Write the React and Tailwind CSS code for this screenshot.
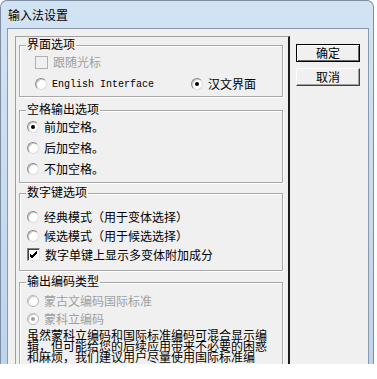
import React from 'react'

const cjk = "font-['Noto_Sans_CJK_SC','Noto_Sans_CJK_JP',sans-serif]"

function Radio({ checked, disabled }) {
  return (
    <span
      className={`relative inline-block w-[12px] h-[12px] shrink-0 rounded-full border ${
        disabled ? 'border-[#b8b8b8]' : 'border-t-[#8a8a8a] border-l-[#8a8a8a] border-b-[#dcdcdc] border-r-[#dcdcdc]'
      } bg-white shadow-[inset_1px_1px_0_#c8c8c8]`}
    >
      {checked && (
        <span
          className={`absolute left-[3px] top-[3px] w-[4px] h-[4px] rounded-full ${disabled ? 'bg-[#a0a0a0]' : 'bg-black'}`}
        />
      )}
    </span>
  )
}

function Check({ checked, disabled }) {
  return (
    <span
      className={`relative inline-block w-[13px] h-[13px] shrink-0 border ${
        disabled
          ? 'border-[#b0b0b0] bg-[#f0f0f0]'
          : 'border-t-[#808080] border-l-[#808080] border-b-[#e6e6e6] border-r-[#e6e6e6] bg-white shadow-[inset_1px_1px_0_#404040]'
      }`}
    >
      {checked && (
        <svg className="absolute left-[1px] top-[1px]" width="9" height="9" viewBox="0 0 9 9">
          <path d="M1 4 L3 6 L8 1 M1 5 L3 7 L8 2 M1 6 L3 8 L8 3" stroke="#000" strokeWidth="1" fill="none" />
        </svg>
      )}
    </span>
  )
}

function Group({ label, className, children }) {
  return (
    <div className={`relative shrink-0 border border-[#a8a8a8] shadow-[1px_1px_0_#fff,inset_1px_1px_0_#fff] ${className}`}>
      <span className="absolute left-[6px] -top-[9px] px-[1px] bg-[#f0f0f0] text-[12px] leading-[14px] text-black">
        {label}
      </span>
      {children}
    </div>
  )
}

function Row({ h, pl, children, disabled }) {
  return (
    <div
      className={`flex items-center gap-[5px] ${h} ${pl} text-[12px] ${disabled ? 'text-[#a0a0a0]' : 'text-black'}`}
    >
      {children}
    </div>
  )
}

export default function App() {
  return (
    <div className={`w-[377px] h-[379px] bg-white overflow-hidden ${cjk}`}>
      <div className="w-[374px] h-[364px] rounded-t-[7px] border border-b-0 border-[#7f8fa3] bg-gradient-to-b from-[#d2e3f4] via-[#c9ddf1] to-[#bcd4ed] flex flex-col">
        <div className="h-[27px] shrink-0 pl-[7px] flex items-center text-[12px] text-black">输入法设置</div>
        <div className="ml-[6px] w-[362px] flex-1 min-h-0 overflow-hidden border border-b-0 border-[#8b9aab] bg-[#f0f0f0] flex items-start">
          <div className="ml-[7px] mt-[7px] w-[275px] h-[340px] shrink-0 border-l border-t border-[#a0a0a0] border-r-2 border-r-[#1c1c1c] pl-[3px] pr-[5px] pt-[8px] flex flex-col">
            <Group label="界面选项" className="h-[52px] pt-[5px]">
              <Row h="h-[22px]" pl="pl-[15px]" disabled>
                <Check disabled />
                <span>跟随光标</span>
              </Row>
              <div className="flex h-[22px] items-center">
                <div className="flex items-center gap-[5px] pl-[15px] w-[171px]">
                  <Radio />
                  <span className="font-['Liberation_Mono',monospace] text-[10px] text-black">English Interface</span>
                </div>
                <div className="flex items-center gap-[5px] text-[12px]">
                  <Radio checked />
                  <span>汉文界面</span>
                </div>
              </div>
            </Group>

            <Group label="空格输出选项" className="mt-[13px] h-[73px] pt-[5px]">
              <Row h="h-[21px]" pl="pl-[7px]">
                <Radio checked />
                <span>前加空格。</span>
              </Row>
              <Row h="h-[21px]" pl="pl-[7px]">
                <Radio />
                <span>后加空格。</span>
              </Row>
              <Row h="h-[21px]" pl="pl-[7px]">
                <Radio />
                <span>不加空格。</span>
              </Row>
            </Group>

            <Group label="数字键选项" className="mt-[10px] h-[78px] pt-[13px]">
              <Row h="h-[19px]" pl="pl-[7px]">
                <Radio />
                <span>经典模式（用于变体选择）</span>
              </Row>
              <Row h="h-[19px]" pl="pl-[7px]">
                <Radio />
                <span>候选模式（用于候选选择）</span>
              </Row>
              <Row h="h-[19px]" pl="pl-[7px]">
                <Check checked />
                <span>数字单键上显示多变体附加成分</span>
              </Row>
            </Group>

            <Group label="输出编码类型" className="mt-[11px] h-[120px] pt-[9px]">
              <Row h="h-[18px]" pl="pl-[7px]" disabled>
                <Radio disabled />
                <span>蒙古文编码国际标准</span>
              </Row>
              <Row h="h-[18px]" pl="pl-[7px]" disabled>
                <Radio checked disabled />
                <span>蒙科立编码</span>
              </Row>
              <p className="mt-[1px] ml-[7px] w-[242px] text-[12px] leading-[11px] text-black">
                虽然蒙科立编码和国际标准编码可混合显示编辑，但可能给您的后续应用带来不必要的困惑和麻烦，我们建议用户尽量使用国际标准编
              </p>
            </Group>
          </div>

          <div className="ml-[6px] mt-[15px] flex flex-col gap-[6px]">
            <button className="w-[64px] h-[18px] border border-black bg-[#f0f0f0] shadow-[inset_1px_1px_0_#fff,inset_-1px_-1px_0_#696969] text-[12px] leading-[14px] text-black">
              确定
            </button>
            <button className="w-[64px] h-[18px] border border-t-white border-l-white border-b-[#404040] border-r-[#404040] bg-[#f0f0f0] shadow-[inset_-1px_-1px_0_#a0a0a0] text-[12px] leading-[14px] text-black">
              取消
            </button>
          </div>
        </div>
      </div>
    </div>
  )
}
